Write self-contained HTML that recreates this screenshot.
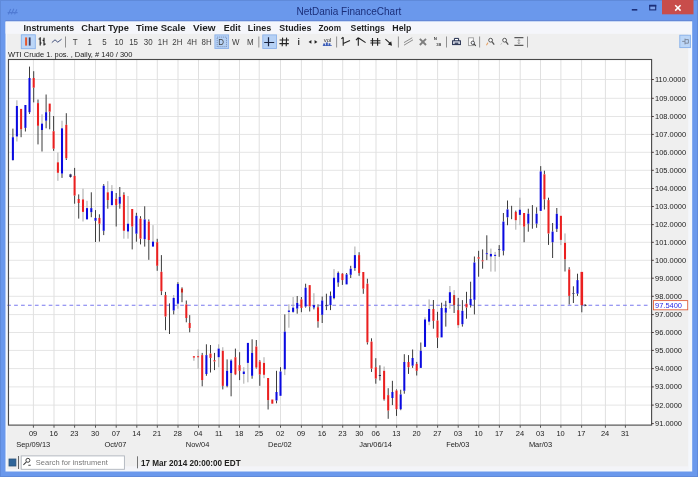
<!DOCTYPE html>
<html><head><meta charset="utf-8"><title>NetDania FinanceChart</title>
<style>
html,body{margin:0;padding:0;}
body{width:698px;height:477px;overflow:hidden;background:#6a98ec;font-family:"Liberation Sans",sans-serif;}
svg{display:block;position:absolute;left:0;top:0;will-change:transform;}
text{font-family:"Liberation Sans",sans-serif;}
</style></head><body>
<svg width="698" height="477" viewBox="0 0 698 477">
<rect x="0" y="0" width="698" height="477" fill="#6a98ec"/>
<rect x="0" y="0" width="698" height="1" fill="#5f8ada"/>
<rect x="0" y="0" width="1" height="477" fill="#5f8ada"/>
<rect x="697" y="0" width="1" height="477" fill="#5f8ada"/>
<rect x="0" y="476" width="698" height="1" fill="#5f8ada"/>
<rect x="5.5" y="20.2" width="686.7" height="1.2" fill="#6384d2"/>
<rect x="5.5" y="21.3" width="686.7" height="450.2" fill="#f4f7fc"/>
<rect x="7" y="33.6" width="681.2" height="435.8" fill="#efefef"/>
<rect x="124" y="466.4" width="564.2" height="3.2" fill="#f3f4f8"/>
<rect x="5.6" y="22" width="686.4" height="11.6" fill="#f5f6fb"/>
<text x="296.4" y="15" font-size="10.8" fill="#1b2f7a" textLength="104.9" lengthAdjust="spacingAndGlyphs">NetDania FinanceChart</text>
<path d="M8.4 14.4 L10.6 9 M11.4 14.4 L13.8 8.8 M14.6 14.4 L16.8 9.4 M7.6 12.6 H17.6" stroke="#507bd4" stroke-width="1.1" fill="none"/>
<rect x="631.8" y="9" width="5.5" height="1.6" fill="#1b2f7a"/>
<rect x="649.7" y="5.3" width="6" height="4.6" fill="#7ea3ea" stroke="#1b2f7a" stroke-width="1.1"/>
<rect x="649.2" y="5" width="7" height="1.6" fill="#1b2f7a"/>
<rect x="662" y="0" width="31.5" height="14.3" fill="#c84d4b"/>
<path d="M675.2 5.2 L680.6 10.6 M680.6 5.2 L675.2 10.6" stroke="#fff" stroke-width="1.5" fill="none"/>
<text x="23.6" y="31" font-size="9.1" font-weight="bold" fill="#1e1e1e" textLength="50.6" lengthAdjust="spacingAndGlyphs">Instruments</text>
<text x="81.2" y="31" font-size="9.1" font-weight="bold" fill="#1e1e1e" textLength="47.7" lengthAdjust="spacingAndGlyphs">Chart Type</text>
<text x="135.9" y="31" font-size="9.1" font-weight="bold" fill="#1e1e1e" textLength="49.7" lengthAdjust="spacingAndGlyphs">Time Scale</text>
<text x="193.0" y="31" font-size="9.1" font-weight="bold" fill="#1e1e1e" textLength="22.6" lengthAdjust="spacingAndGlyphs">View</text>
<text x="223.7" y="31" font-size="9.1" font-weight="bold" fill="#1e1e1e" textLength="17.0" lengthAdjust="spacingAndGlyphs">Edit</text>
<text x="247.7" y="31" font-size="9.1" font-weight="bold" fill="#1e1e1e" textLength="23.6" lengthAdjust="spacingAndGlyphs">Lines</text>
<text x="279.3" y="31" font-size="9.1" font-weight="bold" fill="#1e1e1e" textLength="32.1" lengthAdjust="spacingAndGlyphs">Studies</text>
<text x="318.5" y="31" font-size="9.1" font-weight="bold" fill="#1e1e1e" textLength="22.5" lengthAdjust="spacingAndGlyphs">Zoom</text>
<text x="350.6" y="31" font-size="9.1" font-weight="bold" fill="#1e1e1e" textLength="34.3" lengthAdjust="spacingAndGlyphs">Settings</text>
<text x="392.3" y="31" font-size="9.1" font-weight="bold" fill="#1e1e1e" textLength="19.1" lengthAdjust="spacingAndGlyphs">Help</text>
<rect x="21.3" y="34.8" width="14" height="13.9" fill="#bcd6f7" stroke="#86b0ea" stroke-width="0.9"/>
<rect x="25.1" y="37.4" width="2" height="8.2" fill="#e4572e"/>
<rect x="28.8" y="37.4" width="1.8" height="8.2" fill="#3a3f66"/>
<path d="M40.2 37.2 V45.4 M38.6 39 H40.2 M40.2 43 H41.6 M44 37.8 V45.6 M42.6 40.4 H44 M44 44.2 H45.6" stroke="#222" stroke-width="1.2" fill="none"/>
<path d="M51.8 42.6 L55 39.8 L57.8 42.2 L61.6 39.2" stroke="#3b4a78" stroke-width="0.95" fill="none"/>
<rect x="65.0" y="36.5" width="0.9" height="11" fill="#858585"/>
<rect x="258.4" y="36.5" width="0.9" height="11" fill="#858585"/>
<rect x="336.2" y="36.5" width="0.9" height="11" fill="#858585"/>
<rect x="397.9" y="36.5" width="0.9" height="11" fill="#858585"/>
<rect x="446.1" y="36.5" width="0.9" height="11" fill="#858585"/>
<rect x="479.2" y="36.5" width="0.9" height="11" fill="#858585"/>
<rect x="527.0" y="36.5" width="0.9" height="11" fill="#858585"/>
<text transform="translate(75.2,44.9) scale(0.88,1)" font-size="9" text-anchor="middle" fill="#3c3c3c">T</text>
<text transform="translate(89.8,44.9) scale(0.88,1)" font-size="9" text-anchor="middle" fill="#3c3c3c">1</text>
<text transform="translate(104.4,44.9) scale(0.88,1)" font-size="9" text-anchor="middle" fill="#3c3c3c">5</text>
<text transform="translate(119.0,44.9) scale(0.88,1)" font-size="9" text-anchor="middle" fill="#3c3c3c">10</text>
<text transform="translate(133.6,44.9) scale(0.88,1)" font-size="9" text-anchor="middle" fill="#3c3c3c">15</text>
<text transform="translate(148.2,44.9) scale(0.88,1)" font-size="9" text-anchor="middle" fill="#3c3c3c">30</text>
<text transform="translate(162.8,44.9) scale(0.88,1)" font-size="9" text-anchor="middle" fill="#3c3c3c">1H</text>
<text transform="translate(177.4,44.9) scale(0.88,1)" font-size="9" text-anchor="middle" fill="#3c3c3c">2H</text>
<text transform="translate(192.0,44.9) scale(0.88,1)" font-size="9" text-anchor="middle" fill="#3c3c3c">4H</text>
<text transform="translate(206.6,44.9) scale(0.88,1)" font-size="9" text-anchor="middle" fill="#3c3c3c">8H</text>
<rect x="214.9" y="34.9" width="13.7" height="13.6" fill="#b6d1f5" stroke="#8db2ea" stroke-width="0.9"/>
<rect x="217.2" y="37.1" width="9.3" height="9.6" fill="none" stroke="#5a6f99" stroke-width="0.7" stroke-dasharray="1 1"/>
<text transform="translate(221.2,44.9) scale(0.88,1)" font-size="9" text-anchor="middle" fill="#3c3c3c">D</text>
<text transform="translate(235.8,44.9) scale(0.88,1)" font-size="9" text-anchor="middle" fill="#3c3c3c">W</text>
<text transform="translate(250.4,44.9) scale(0.88,1)" font-size="9" text-anchor="middle" fill="#3c3c3c">M</text>
<rect x="262.8" y="34.9" width="13.7" height="13.6" fill="#b6d1f5" stroke="#8db2ea" stroke-width="0.9"/>
<path d="M264.2 42.5 H274.2 M268.5 37.2 V46.2" stroke="#1a2440" stroke-width="1.2" fill="none"/>
<path d="M279.6 40 H289 M279.4 43.6 H288.8 M282.6 37.6 L282.2 46.2 M286.6 37.6 L286.2 46.2" stroke="#222" stroke-width="1.1" fill="none"/>
<text x="298.6" y="44.9" font-size="8.6" text-anchor="middle" font-family="Liberation Mono" font-weight="bold" fill="#333">i</text>
<path d="M308.6 41.9 L311.4 40.1 V43.7 Z M317.4 41.9 L314.6 40.1 V43.7 Z" fill="#222"/>
<text x="327.6" y="41.6" font-size="6" text-anchor="middle" fill="#333">vol</text>
<path d="M323.2 45.6 V43.4 H325 V45.6 Z M325.8 45.6 V42.6 H327.8 V45.6 Z M328.6 45.6 V43.2 H330.4 V45.6 Z M322.8 45.2 H331.8 V45.9 H322.8 Z" fill="#3a5cb8"/>
<path d="M343.2 37.2 V45.8 M341.4 38.8 L343.2 37.2 M343.2 43.6 L350 40.6" stroke="#222" stroke-width="1.1" fill="none"/>
<path d="M358.3 37.4 V45.8 M356 40.2 L358.3 37.6 M358.3 37.8 L365.6 42.6" stroke="#222" stroke-width="1.1" fill="none"/>
<path d="M372.5 37.9 V45.8 M377.6 37.9 V45.8 M370.4 40.7 H380.4 M370.4 43 H380.4" stroke="#222" stroke-width="1.1" fill="none"/>
<path d="M385.4 39.1 L390.4 43.6" stroke="#222" stroke-width="1.1" fill="none"/>
<path d="M392 45.8 L387.8 44.6 L391.2 41.2 Z" fill="#222"/>
<path d="M404 45.2 L413 39.8 M404 42.6 L412.2 37.8" stroke="#8c8c8c" stroke-width="1" fill="none"/>
<path d="M419.8 38.8 L426 45 M426 38.8 L419.8 45" stroke="#7e7e7e" stroke-width="1.9" fill="none"/>
<text x="433.8" y="40" font-size="4.4" fill="#444" font-weight="bold">N</text>
<text x="436.2" y="46" font-size="4.4" fill="#444" font-weight="bold">38</text>
<path d="M454.4 41 V38.4 H458.6 V41" stroke="#1f2a4a" stroke-width="1" fill="#fff"/>
<rect x="452.6" y="40.8" width="7.8" height="3.8" fill="#dfe3ee" stroke="#1f2a4a" stroke-width="1"/>
<rect x="454.6" y="42.6" width="3.8" height="1.2" fill="#1f2a4a"/>
<rect x="468.6" y="37.8" width="4.8" height="7.8" fill="#fbfbfb" stroke="#9a9a9a" stroke-width="0.9"/>
<circle cx="472.8" cy="42.8" r="1.7" fill="#f4f6ff" stroke="#444" stroke-width="0.9"/>
<path d="M474 44 L475.8 45.8" stroke="#444" stroke-width="1.1"/>
<circle cx="490.6" cy="40.2" r="1.9" fill="#fafafa" stroke="#555" stroke-width="1"/>
<path d="M492.0 41.6 L494.2 44.6" stroke="#555" stroke-width="1.3"/>
<circle cx="504.6" cy="40.2" r="1.9" fill="#fafafa" stroke="#555" stroke-width="1"/>
<path d="M506.0 41.6 L508.2 44.6" stroke="#555" stroke-width="1.3"/>
<path d="M486.4 45.2 L488 42.6" stroke="#e8a56a" stroke-width="1.1"/>
<path d="M500.6 44.8 L502 42.8" stroke="#c8c8c8" stroke-width="1"/>
<path d="M514.4 37.7 H523.4 M514.4 45.4 H523.4" stroke="#5a5a5a" stroke-width="1.3"/>
<path d="M518.9 39.6 V43.6 M517.8 40.8 L518.9 39.6 L520 40.8 M517.8 42.6 L518.9 43.8 L520 42.6" stroke="#8a8a8a" stroke-width="0.8" fill="none"/>
<rect x="679.8" y="35.2" width="10.6" height="12.4" fill="#bcd6f7" stroke="#86b0ea" stroke-width="0.9"/>
<path d="M682.2 41.4 H685 M685 38.6 V44.4 M685 39.6 H688.4 M685 43.2 H688.4 M688.4 39.6 V43.2" stroke="#7a8699" stroke-width="0.9" fill="none"/>
<text x="8" y="57.3" font-size="7.47" fill="#222" textLength="124.4" lengthAdjust="spacingAndGlyphs">WTI Crude 1. pos. , Daily, # 140 / 300</text>
<rect x="8.5" y="59.5" width="643.1" height="365.6" fill="#fff"/>
<rect x="8.5" y="404.60" width="643.1" height="1" fill="#e5e5e5"/>
<rect x="8.5" y="386.40" width="643.1" height="1" fill="#e5e5e5"/>
<rect x="8.5" y="368.10" width="643.1" height="1" fill="#e5e5e5"/>
<rect x="8.5" y="349.90" width="643.1" height="1" fill="#e5e5e5"/>
<rect x="8.5" y="332.00" width="643.1" height="1" fill="#e5e5e5"/>
<rect x="8.5" y="314.10" width="643.1" height="1" fill="#e5e5e5"/>
<rect x="8.5" y="295.80" width="643.1" height="1" fill="#e5e5e5"/>
<rect x="8.5" y="277.70" width="643.1" height="1" fill="#e5e5e5"/>
<rect x="8.5" y="259.80" width="643.1" height="1" fill="#e5e5e5"/>
<rect x="8.5" y="241.80" width="643.1" height="1" fill="#e5e5e5"/>
<rect x="8.5" y="224.10" width="643.1" height="1" fill="#e5e5e5"/>
<rect x="8.5" y="206.00" width="643.1" height="1" fill="#e5e5e5"/>
<rect x="8.5" y="188.00" width="643.1" height="1" fill="#e5e5e5"/>
<rect x="8.5" y="169.80" width="643.1" height="1" fill="#e5e5e5"/>
<rect x="8.5" y="151.80" width="643.1" height="1" fill="#e5e5e5"/>
<rect x="8.5" y="133.90" width="643.1" height="1" fill="#e5e5e5"/>
<rect x="8.5" y="116.00" width="643.1" height="1" fill="#e5e5e5"/>
<rect x="8.5" y="97.80" width="643.1" height="1" fill="#e5e5e5"/>
<rect x="8.5" y="79.00" width="643.1" height="1" fill="#e5e5e5"/>
<rect x="32.90" y="59.5" width="1" height="365.6" fill="#e0e0e0"/>
<rect x="53.50" y="59.5" width="1" height="365.6" fill="#e0e0e0"/>
<rect x="74.10" y="59.5" width="1" height="365.6" fill="#e0e0e0"/>
<rect x="95.00" y="59.5" width="1" height="365.6" fill="#e0e0e0"/>
<rect x="115.70" y="59.5" width="1" height="365.6" fill="#e0e0e0"/>
<rect x="136.30" y="59.5" width="1" height="365.6" fill="#e0e0e0"/>
<rect x="156.80" y="59.5" width="1" height="365.6" fill="#e0e0e0"/>
<rect x="177.50" y="59.5" width="1" height="365.6" fill="#e0e0e0"/>
<rect x="198.00" y="59.5" width="1" height="365.6" fill="#e0e0e0"/>
<rect x="218.60" y="59.5" width="1" height="365.6" fill="#e0e0e0"/>
<rect x="239.00" y="59.5" width="1" height="365.6" fill="#e0e0e0"/>
<rect x="258.70" y="59.5" width="1" height="365.6" fill="#e0e0e0"/>
<rect x="280.00" y="59.5" width="1" height="365.6" fill="#e0e0e0"/>
<rect x="300.90" y="59.5" width="1" height="365.6" fill="#e0e0e0"/>
<rect x="321.80" y="59.5" width="1" height="365.6" fill="#e0e0e0"/>
<rect x="342.20" y="59.5" width="1" height="365.6" fill="#e0e0e0"/>
<rect x="359.10" y="59.5" width="1" height="365.6" fill="#ebebeb"/>
<rect x="375.50" y="59.5" width="1" height="365.6" fill="#e0e0e0"/>
<rect x="396.10" y="59.5" width="1" height="365.6" fill="#e0e0e0"/>
<rect x="416.40" y="59.5" width="1" height="365.6" fill="#e0e0e0"/>
<rect x="437.10" y="59.5" width="1" height="365.6" fill="#e0e0e0"/>
<rect x="457.70" y="59.5" width="1" height="365.6" fill="#e0e0e0"/>
<rect x="478.20" y="59.5" width="1" height="365.6" fill="#e0e0e0"/>
<rect x="498.90" y="59.5" width="1" height="365.6" fill="#e0e0e0"/>
<rect x="519.70" y="59.5" width="1" height="365.6" fill="#e0e0e0"/>
<rect x="540.00" y="59.5" width="1" height="365.6" fill="#e0e0e0"/>
<rect x="560.40" y="59.5" width="1" height="365.6" fill="#e0e0e0"/>
<rect x="581.10" y="59.5" width="1" height="365.6" fill="#e0e0e0"/>
<rect x="604.90" y="59.5" width="1" height="365.6" fill="#e0e0e0"/>
<rect x="624.90" y="59.5" width="1" height="365.6" fill="#e0e0e0"/>
<line x1="7.2" y1="305.2" x2="648.5" y2="305.2" stroke="#7878ee" stroke-width="1.1" stroke-dasharray="3.7 3.22"/>
<rect x="12.40" y="128.6" width="1" height="8.6" fill="#3c3c3c"/>
<rect x="12.40" y="160.1" width="1" height="0.4" fill="#3c3c3c"/>
<rect x="11.88" y="137.2" width="2.05" height="22.9" fill="#0a0ae0"/>
<rect x="16.40" y="100.3" width="1" height="5.7" fill="#a8a8a8"/>
<rect x="16.40" y="136.5" width="1" height="5.0" fill="#a8a8a8"/>
<rect x="15.87" y="106.0" width="2.05" height="30.5" fill="#0a0ae0"/>
<rect x="20.60" y="129.3" width="1" height="7.9" fill="#3c3c3c"/>
<rect x="20.08" y="108.9" width="2.05" height="20.4" fill="#ea2020"/>
<rect x="24.90" y="127.9" width="1" height="3.6" fill="#3c3c3c"/>
<rect x="24.38" y="105.0" width="2.05" height="22.9" fill="#0a0ae0"/>
<rect x="29.00" y="66.6" width="1" height="11.4" fill="#3c3c3c"/>
<rect x="29.00" y="112.2" width="1" height="1.7" fill="#3c3c3c"/>
<rect x="28.48" y="78.0" width="2.05" height="34.2" fill="#0a0ae0"/>
<rect x="33.20" y="71.2" width="1" height="6.8" fill="#3c3c3c"/>
<rect x="33.20" y="87.7" width="1" height="14.7" fill="#3c3c3c"/>
<rect x="32.68" y="78.0" width="2.05" height="9.7" fill="#ea2020"/>
<rect x="37.50" y="99.5" width="1" height="3.6" fill="#3c3c3c"/>
<rect x="37.50" y="125.8" width="1" height="18.6" fill="#3c3c3c"/>
<rect x="36.98" y="103.1" width="2.05" height="22.7" fill="#ea2020"/>
<rect x="41.50" y="114.3" width="1" height="9.3" fill="#a8a8a8"/>
<rect x="41.50" y="130.0" width="1" height="21.5" fill="#3c3c3c"/>
<rect x="40.98" y="123.6" width="2.05" height="6.4" fill="#0a0ae0"/>
<rect x="45.60" y="94.5" width="1" height="17.7" fill="#3c3c3c"/>
<rect x="45.60" y="120.7" width="1" height="7.6" fill="#3c3c3c"/>
<rect x="45.08" y="112.2" width="2.05" height="8.5" fill="#0a0ae0"/>
<rect x="49.20" y="111.7" width="1" height="17.6" fill="#3c3c3c"/>
<rect x="48.68" y="103.6" width="2.05" height="8.1" fill="#ea2020"/>
<rect x="53.10" y="116.0" width="1" height="15.2" fill="#3c3c3c"/>
<rect x="53.10" y="148.7" width="1" height="2.1" fill="#3c3c3c"/>
<rect x="52.58" y="131.2" width="2.05" height="17.5" fill="#ea2020"/>
<rect x="57.40" y="152.5" width="1" height="9.8" fill="#a8a8a8"/>
<rect x="57.40" y="172.8" width="1" height="8.0" fill="#a8a8a8"/>
<rect x="56.88" y="162.3" width="2.05" height="10.5" fill="#ea2020"/>
<rect x="61.50" y="120.7" width="1" height="7.6" fill="#a8a8a8"/>
<rect x="61.50" y="173.6" width="1" height="4.3" fill="#3c3c3c"/>
<rect x="60.98" y="128.3" width="2.05" height="45.3" fill="#0a0ae0"/>
<rect x="65.80" y="113.2" width="1" height="11.6" fill="#3c3c3c"/>
<rect x="65.80" y="158.3" width="1" height="1.7" fill="#3c3c3c"/>
<rect x="65.27" y="124.8" width="2.05" height="33.5" fill="#ea2020"/>
<rect x="70.00" y="173.8" width="1" height="0.5" fill="#3c3c3c"/>
<rect x="70.00" y="177.0" width="1" height="0.5" fill="#3c3c3c"/>
<rect x="69.40" y="174.3" width="2.2" height="2.7" fill="#25255a"/>
<rect x="74.10" y="167.9" width="1" height="7.9" fill="#3c3c3c"/>
<rect x="74.10" y="195.6" width="1" height="8.1" fill="#3c3c3c"/>
<rect x="73.57" y="175.8" width="2.05" height="19.8" fill="#ea2020"/>
<rect x="78.20" y="194.4" width="1" height="4.6" fill="#3c3c3c"/>
<rect x="78.20" y="203.0" width="1" height="15.6" fill="#3c3c3c"/>
<rect x="77.67" y="199.0" width="2.05" height="4.0" fill="#ea2020"/>
<rect x="82.50" y="188.7" width="1" height="10.7" fill="#a8a8a8"/>
<rect x="82.50" y="211.9" width="1" height="9.6" fill="#a8a8a8"/>
<rect x="81.97" y="199.4" width="2.05" height="12.5" fill="#ea2020"/>
<rect x="86.50" y="200.8" width="1" height="7.3" fill="#a8a8a8"/>
<rect x="85.97" y="208.1" width="2.05" height="11.3" fill="#0a0ae0"/>
<rect x="90.80" y="192.3" width="1" height="15.8" fill="#3c3c3c"/>
<rect x="90.80" y="212.2" width="1" height="5.0" fill="#3c3c3c"/>
<rect x="90.27" y="208.1" width="2.05" height="4.1" fill="#0a0ae0"/>
<rect x="95.00" y="210.1" width="1" height="7.8" fill="#3c3c3c"/>
<rect x="95.00" y="220.8" width="1" height="21.2" fill="#3c3c3c"/>
<rect x="94.47" y="217.9" width="2.05" height="2.9" fill="#0a0ae0"/>
<rect x="98.90" y="214.3" width="1" height="3.6" fill="#3c3c3c"/>
<rect x="98.90" y="223.7" width="1" height="17.9" fill="#3c3c3c"/>
<rect x="98.38" y="217.9" width="2.05" height="5.8" fill="#ea2020"/>
<rect x="103.20" y="184.1" width="1" height="1.7" fill="#3c3c3c"/>
<rect x="103.20" y="230.8" width="1" height="4.3" fill="#3c3c3c"/>
<rect x="102.67" y="185.8" width="2.05" height="45.0" fill="#0a0ae0"/>
<rect x="107.30" y="181.2" width="1" height="11.1" fill="#a8a8a8"/>
<rect x="107.30" y="200.1" width="1" height="8.6" fill="#3c3c3c"/>
<rect x="106.77" y="192.3" width="2.05" height="7.8" fill="#ea2020"/>
<rect x="111.40" y="185.1" width="1" height="6.0" fill="#a8a8a8"/>
<rect x="110.88" y="191.1" width="2.05" height="14.1" fill="#0a0ae0"/>
<rect x="115.70" y="193.0" width="1" height="5.7" fill="#3c3c3c"/>
<rect x="115.70" y="205.1" width="1" height="21.4" fill="#3c3c3c"/>
<rect x="115.17" y="198.7" width="2.05" height="6.4" fill="#ea2020"/>
<rect x="119.30" y="187.0" width="1" height="9.8" fill="#3c3c3c"/>
<rect x="119.30" y="203.8" width="1" height="4.9" fill="#3c3c3c"/>
<rect x="118.77" y="196.8" width="2.05" height="7.0" fill="#0a0ae0"/>
<rect x="123.40" y="192.3" width="1" height="2.4" fill="#3c3c3c"/>
<rect x="123.40" y="230.8" width="1" height="7.9" fill="#a8a8a8"/>
<rect x="122.88" y="194.7" width="2.05" height="36.1" fill="#ea2020"/>
<rect x="127.50" y="196.0" width="1" height="27.7" fill="#a8a8a8"/>
<rect x="127.50" y="231.5" width="1" height="7.2" fill="#a8a8a8"/>
<rect x="126.97" y="223.7" width="2.05" height="7.8" fill="#0a0ae0"/>
<rect x="131.70" y="226.5" width="1" height="22.9" fill="#3c3c3c"/>
<rect x="131.17" y="209.0" width="2.05" height="17.5" fill="#ea2020"/>
<rect x="135.90" y="212.8" width="1" height="3.0" fill="#3c3c3c"/>
<rect x="135.90" y="233.7" width="1" height="8.0" fill="#3c3c3c"/>
<rect x="135.38" y="215.8" width="2.05" height="17.9" fill="#0a0ae0"/>
<rect x="140.00" y="216.2" width="1" height="2.4" fill="#3c3c3c"/>
<rect x="140.00" y="238.7" width="1" height="5.7" fill="#3c3c3c"/>
<rect x="139.47" y="218.6" width="2.05" height="20.1" fill="#ea2020"/>
<rect x="144.20" y="206.3" width="1" height="13.1" fill="#3c3c3c"/>
<rect x="144.20" y="239.2" width="1" height="7.4" fill="#3c3c3c"/>
<rect x="143.67" y="219.4" width="2.05" height="19.8" fill="#0a0ae0"/>
<rect x="148.30" y="219.4" width="1" height="2.1" fill="#3c3c3c"/>
<rect x="148.30" y="240.0" width="1" height="19.8" fill="#3c3c3c"/>
<rect x="147.78" y="221.5" width="2.05" height="18.5" fill="#ea2020"/>
<rect x="152.50" y="225.1" width="1" height="16.5" fill="#a8a8a8"/>
<rect x="151.97" y="241.6" width="2.05" height="5.0" fill="#0a0ae0"/>
<rect x="156.70" y="238.8" width="1" height="3.4" fill="#3c3c3c"/>
<rect x="156.70" y="265.8" width="1" height="5.0" fill="#3c3c3c"/>
<rect x="156.17" y="242.2" width="2.05" height="23.6" fill="#ea2020"/>
<rect x="160.90" y="255.1" width="1" height="16.7" fill="#3c3c3c"/>
<rect x="160.90" y="291.2" width="1" height="3.9" fill="#3c3c3c"/>
<rect x="160.38" y="271.8" width="2.05" height="19.4" fill="#ea2020"/>
<rect x="165.00" y="291.9" width="1" height="3.2" fill="#3c3c3c"/>
<rect x="165.00" y="316.5" width="1" height="13.7" fill="#3c3c3c"/>
<rect x="164.47" y="295.1" width="2.05" height="21.4" fill="#ea2020"/>
<rect x="169.00" y="303.4" width="1" height="9.6" fill="#3c3c3c"/>
<rect x="169.00" y="313.0" width="1" height="21.0" fill="#3c3c3c"/>
<rect x="173.20" y="295.0" width="1" height="2.9" fill="#a8a8a8"/>
<rect x="173.20" y="310.5" width="1" height="3.9" fill="#3c3c3c"/>
<rect x="172.67" y="297.9" width="2.05" height="12.6" fill="#0a0ae0"/>
<rect x="177.40" y="282.2" width="1" height="1.8" fill="#3c3c3c"/>
<rect x="177.40" y="303.7" width="1" height="5.0" fill="#a8a8a8"/>
<rect x="176.88" y="284.0" width="2.05" height="19.7" fill="#0a0ae0"/>
<rect x="181.50" y="287.3" width="1" height="1.1" fill="#3c3c3c"/>
<rect x="181.50" y="292.7" width="1" height="9.5" fill="#3c3c3c"/>
<rect x="180.97" y="288.4" width="2.05" height="4.3" fill="#c42a22"/>
<rect x="185.80" y="300.5" width="1" height="3.9" fill="#3c3c3c"/>
<rect x="185.80" y="318.0" width="1" height="4.3" fill="#3c3c3c"/>
<rect x="185.28" y="304.4" width="2.05" height="13.6" fill="#ea2020"/>
<rect x="189.20" y="315.1" width="1" height="7.9" fill="#3c3c3c"/>
<rect x="189.20" y="328.0" width="1" height="4.3" fill="#3c3c3c"/>
<rect x="188.67" y="323.0" width="2.05" height="5.0" fill="#ea2020"/>
<rect x="193.40" y="357.6" width="1" height="3.2" fill="#a8a8a8"/>
<rect x="192.88" y="356.2" width="2.05" height="1.4" fill="#ea2020"/>
<rect x="197.60" y="349.3" width="1" height="6.9" fill="#a8a8a8"/>
<rect x="197.60" y="357.3" width="1" height="11.4" fill="#a8a8a8"/>
<rect x="197.07" y="356.2" width="2.05" height="1.1" fill="#ea2020"/>
<rect x="201.70" y="352.9" width="1" height="2.2" fill="#3c3c3c"/>
<rect x="201.70" y="380.1" width="1" height="6.2" fill="#3c3c3c"/>
<rect x="201.17" y="355.1" width="2.05" height="25.0" fill="#ea2020"/>
<rect x="205.90" y="344.3" width="1" height="10.8" fill="#3c3c3c"/>
<rect x="205.90" y="374.0" width="1" height="1.8" fill="#3c3c3c"/>
<rect x="205.38" y="355.1" width="2.05" height="18.9" fill="#0a0ae0"/>
<rect x="210.00" y="345.0" width="1" height="8.6" fill="#3c3c3c"/>
<rect x="210.00" y="357.9" width="1" height="14.6" fill="#3c3c3c"/>
<rect x="209.47" y="353.6" width="2.05" height="4.3" fill="#ea2020"/>
<rect x="214.00" y="352.9" width="1" height="7.2" fill="#3c3c3c"/>
<rect x="214.00" y="361.5" width="1" height="8.6" fill="#3c3c3c"/>
<rect x="213.47" y="360.1" width="2.05" height="1.4" fill="#ea2020"/>
<rect x="218.20" y="344.3" width="1" height="4.3" fill="#a8a8a8"/>
<rect x="218.20" y="357.2" width="1" height="10.0" fill="#a8a8a8"/>
<rect x="217.67" y="348.6" width="2.05" height="8.6" fill="#0a0ae0"/>
<rect x="222.30" y="347.2" width="1" height="3.6" fill="#a8a8a8"/>
<rect x="222.30" y="385.9" width="1" height="3.5" fill="#3c3c3c"/>
<rect x="221.78" y="350.8" width="2.05" height="35.1" fill="#ea2020"/>
<rect x="226.60" y="359.4" width="1" height="11.4" fill="#3c3c3c"/>
<rect x="226.60" y="385.9" width="1" height="1.4" fill="#3c3c3c"/>
<rect x="226.07" y="370.8" width="2.05" height="15.1" fill="#0a0ae0"/>
<rect x="230.60" y="359.4" width="1" height="1.1" fill="#3c3c3c"/>
<rect x="230.60" y="373.0" width="1" height="23.3" fill="#3c3c3c"/>
<rect x="230.07" y="360.5" width="2.05" height="12.5" fill="#0a0ae0"/>
<rect x="234.90" y="348.6" width="1" height="8.6" fill="#3c3c3c"/>
<rect x="234.90" y="374.4" width="1" height="0.7" fill="#3c3c3c"/>
<rect x="234.38" y="357.2" width="2.05" height="17.2" fill="#ea2020"/>
<rect x="239.10" y="352.2" width="1" height="12.9" fill="#3c3c3c"/>
<rect x="239.10" y="370.8" width="1" height="9.3" fill="#3c3c3c"/>
<rect x="238.57" y="365.1" width="2.05" height="5.7" fill="#ea2020"/>
<rect x="243.30" y="367.2" width="1" height="4.3" fill="#a8a8a8"/>
<rect x="243.30" y="374.0" width="1" height="9.7" fill="#a8a8a8"/>
<rect x="242.78" y="371.5" width="2.05" height="2.5" fill="#0a0ae0"/>
<rect x="247.40" y="362.9" width="1" height="19.4" fill="#a8a8a8"/>
<rect x="246.88" y="342.9" width="2.05" height="20.0" fill="#0a0ae0"/>
<rect x="251.60" y="339.3" width="1" height="13.6" fill="#3c3c3c"/>
<rect x="251.60" y="375.8" width="1" height="2.9" fill="#3c3c3c"/>
<rect x="251.07" y="352.9" width="2.05" height="22.9" fill="#0a0ae0"/>
<rect x="255.80" y="340.0" width="1" height="6.5" fill="#3c3c3c"/>
<rect x="255.80" y="367.5" width="1" height="1.1" fill="#3c3c3c"/>
<rect x="255.28" y="346.5" width="2.05" height="21.0" fill="#ea2020"/>
<rect x="259.30" y="360.1" width="1" height="1.4" fill="#3c3c3c"/>
<rect x="259.30" y="374.5" width="1" height="11.3" fill="#3c3c3c"/>
<rect x="258.78" y="361.5" width="2.05" height="13.0" fill="#ea2020"/>
<rect x="263.50" y="357.2" width="1" height="5.7" fill="#a8a8a8"/>
<rect x="263.50" y="374.8" width="1" height="3.4" fill="#a8a8a8"/>
<rect x="262.98" y="362.9" width="2.05" height="11.9" fill="#ea2020"/>
<rect x="267.60" y="400.1" width="1" height="9.4" fill="#3c3c3c"/>
<rect x="267.08" y="378.0" width="2.05" height="22.1" fill="#ea2020"/>
<rect x="271.28" y="399.5" width="2.05" height="4.2" fill="#ea2020"/>
<rect x="276.00" y="370.8" width="1" height="21.2" fill="#3c3c3c"/>
<rect x="276.00" y="400.5" width="1" height="2.8" fill="#3c3c3c"/>
<rect x="275.48" y="392.0" width="2.05" height="8.5" fill="#0a0ae0"/>
<rect x="280.00" y="367.2" width="1" height="4.3" fill="#3c3c3c"/>
<rect x="279.48" y="371.5" width="2.05" height="24.3" fill="#0a0ae0"/>
<rect x="284.30" y="314.4" width="1" height="17.2" fill="#3c3c3c"/>
<rect x="284.30" y="369.3" width="1" height="5.8" fill="#a8a8a8"/>
<rect x="283.78" y="331.6" width="2.05" height="37.7" fill="#0a0ae0"/>
<rect x="288.40" y="304.3" width="1" height="6.2" fill="#a8a8a8"/>
<rect x="288.40" y="311.9" width="1" height="15.8" fill="#a8a8a8"/>
<rect x="287.88" y="310.5" width="2.05" height="1.4" fill="#0a0ae0"/>
<rect x="292.60" y="297.0" width="1" height="10.6" fill="#a8a8a8"/>
<rect x="292.60" y="311.9" width="1" height="0.6" fill="#3c3c3c"/>
<rect x="292.08" y="307.6" width="2.05" height="4.3" fill="#0a0ae0"/>
<rect x="296.70" y="296.0" width="1" height="6.9" fill="#3c3c3c"/>
<rect x="296.70" y="308.6" width="1" height="5.1" fill="#3c3c3c"/>
<rect x="296.18" y="302.9" width="2.05" height="5.7" fill="#0a0ae0"/>
<rect x="300.90" y="297.0" width="1" height="2.4" fill="#3c3c3c"/>
<rect x="300.90" y="307.9" width="1" height="4.3" fill="#3c3c3c"/>
<rect x="300.38" y="299.4" width="2.05" height="8.5" fill="#ea2020"/>
<rect x="305.10" y="283.7" width="1" height="4.0" fill="#3c3c3c"/>
<rect x="305.10" y="306.5" width="1" height="1.1" fill="#3c3c3c"/>
<rect x="304.58" y="287.7" width="2.05" height="18.8" fill="#0a0ae0"/>
<rect x="309.20" y="306.5" width="1" height="5.0" fill="#3c3c3c"/>
<rect x="308.68" y="285.1" width="2.05" height="21.4" fill="#ea2020"/>
<rect x="313.40" y="293.2" width="1" height="11.9" fill="#a8a8a8"/>
<rect x="313.40" y="307.6" width="1" height="1.8" fill="#3c3c3c"/>
<rect x="312.88" y="305.1" width="2.05" height="2.5" fill="#0a0ae0"/>
<rect x="317.50" y="304.3" width="1" height="2.9" fill="#3c3c3c"/>
<rect x="317.50" y="321.5" width="1" height="6.2" fill="#3c3c3c"/>
<rect x="316.98" y="307.2" width="2.05" height="14.3" fill="#ea2020"/>
<rect x="321.70" y="296.5" width="1" height="4.0" fill="#3c3c3c"/>
<rect x="321.70" y="314.8" width="1" height="8.2" fill="#3c3c3c"/>
<rect x="321.18" y="300.5" width="2.05" height="14.3" fill="#0a0ae0"/>
<rect x="325.90" y="293.7" width="1" height="11.4" fill="#3c3c3c"/>
<rect x="325.90" y="306.2" width="1" height="3.9" fill="#3c3c3c"/>
<rect x="325.30" y="305.1" width="2.2" height="1.1" fill="#25255a"/>
<rect x="330.00" y="291.5" width="1" height="4.3" fill="#3c3c3c"/>
<rect x="330.00" y="305.1" width="1" height="5.0" fill="#3c3c3c"/>
<rect x="329.48" y="295.8" width="2.05" height="9.3" fill="#0a0ae0"/>
<rect x="333.50" y="269.1" width="1" height="8.6" fill="#a8a8a8"/>
<rect x="333.50" y="298.0" width="1" height="1.3" fill="#3c3c3c"/>
<rect x="332.98" y="277.7" width="2.05" height="20.3" fill="#0a0ae0"/>
<rect x="337.70" y="271.5" width="1" height="1.5" fill="#3c3c3c"/>
<rect x="337.70" y="282.6" width="1" height="4.2" fill="#3c3c3c"/>
<rect x="337.18" y="273.0" width="2.05" height="9.6" fill="#0a0ae0"/>
<rect x="341.90" y="273.0" width="1" height="0.7" fill="#3c3c3c"/>
<rect x="341.90" y="280.1" width="1" height="4.8" fill="#3c3c3c"/>
<rect x="341.38" y="273.7" width="2.05" height="6.4" fill="#ea2020"/>
<rect x="346.10" y="273.0" width="1" height="1.4" fill="#3c3c3c"/>
<rect x="345.58" y="274.4" width="2.05" height="10.0" fill="#0a0ae0"/>
<rect x="350.20" y="265.8" width="1" height="2.9" fill="#3c3c3c"/>
<rect x="350.20" y="274.8" width="1" height="3.2" fill="#3c3c3c"/>
<rect x="349.68" y="268.7" width="2.05" height="6.1" fill="#0a0ae0"/>
<rect x="354.40" y="246.5" width="1" height="8.6" fill="#a8a8a8"/>
<rect x="354.40" y="268.0" width="1" height="2.8" fill="#3c3c3c"/>
<rect x="353.88" y="255.1" width="2.05" height="12.9" fill="#0a0ae0"/>
<rect x="358.60" y="252.2" width="1" height="2.9" fill="#3c3c3c"/>
<rect x="358.60" y="273.0" width="1" height="2.8" fill="#3c3c3c"/>
<rect x="358.08" y="255.1" width="2.05" height="17.9" fill="#ea2020"/>
<rect x="362.80" y="288.7" width="1" height="5.1" fill="#3c3c3c"/>
<rect x="362.28" y="272.0" width="2.05" height="16.7" fill="#ea2020"/>
<rect x="366.90" y="278.7" width="1" height="5.0" fill="#3c3c3c"/>
<rect x="366.90" y="342.3" width="1" height="2.2" fill="#3c3c3c"/>
<rect x="366.38" y="283.7" width="2.05" height="58.6" fill="#ea2020"/>
<rect x="371.00" y="338.3" width="1" height="3.3" fill="#3c3c3c"/>
<rect x="371.00" y="368.6" width="1" height="3.3" fill="#3c3c3c"/>
<rect x="370.48" y="341.6" width="2.05" height="27.0" fill="#ea2020"/>
<rect x="375.30" y="358.2" width="1" height="9.0" fill="#3c3c3c"/>
<rect x="375.30" y="378.6" width="1" height="5.1" fill="#3c3c3c"/>
<rect x="374.78" y="367.2" width="2.05" height="11.4" fill="#ea2020"/>
<rect x="379.40" y="365.3" width="1" height="9.7" fill="#3c3c3c"/>
<rect x="379.40" y="376.0" width="1" height="4.5" fill="#3c3c3c"/>
<rect x="378.80" y="375.0" width="2.2" height="1.0" fill="#25255a"/>
<rect x="383.60" y="366.5" width="1" height="4.3" fill="#a8a8a8"/>
<rect x="383.60" y="399.4" width="1" height="1.2" fill="#3c3c3c"/>
<rect x="383.08" y="370.8" width="2.05" height="28.6" fill="#ea2020"/>
<rect x="387.70" y="388.2" width="1" height="6.9" fill="#3c3c3c"/>
<rect x="387.70" y="410.6" width="1" height="8.2" fill="#3c3c3c"/>
<rect x="387.18" y="395.1" width="2.05" height="15.5" fill="#ea2020"/>
<rect x="391.90" y="380.8" width="1" height="11.2" fill="#3c3c3c"/>
<rect x="391.90" y="398.0" width="1" height="7.1" fill="#3c3c3c"/>
<rect x="391.38" y="392.0" width="2.05" height="6.0" fill="#0a0ae0"/>
<rect x="396.00" y="389.4" width="1" height="1.1" fill="#3c3c3c"/>
<rect x="396.00" y="409.2" width="1" height="6.7" fill="#3c3c3c"/>
<rect x="395.48" y="390.5" width="2.05" height="18.7" fill="#ea2020"/>
<rect x="400.20" y="389.7" width="1" height="4.7" fill="#3c3c3c"/>
<rect x="400.20" y="409.2" width="1" height="1.0" fill="#3c3c3c"/>
<rect x="399.68" y="394.4" width="2.05" height="14.8" fill="#0a0ae0"/>
<rect x="403.80" y="354.2" width="1" height="7.8" fill="#3c3c3c"/>
<rect x="403.80" y="390.8" width="1" height="2.9" fill="#3c3c3c"/>
<rect x="403.28" y="362.0" width="2.05" height="28.8" fill="#0a0ae0"/>
<rect x="408.00" y="355.1" width="1" height="6.9" fill="#3c3c3c"/>
<rect x="408.00" y="367.2" width="1" height="6.7" fill="#3c3c3c"/>
<rect x="407.48" y="362.0" width="2.05" height="5.2" fill="#ea2020"/>
<rect x="412.10" y="349.5" width="1" height="8.5" fill="#3c3c3c"/>
<rect x="412.10" y="365.7" width="1" height="2.2" fill="#3c3c3c"/>
<rect x="411.58" y="358.0" width="2.05" height="7.7" fill="#0a0ae0"/>
<rect x="416.20" y="361.9" width="1" height="2.0" fill="#3c3c3c"/>
<rect x="416.20" y="370.8" width="1" height="4.7" fill="#3c3c3c"/>
<rect x="415.68" y="363.9" width="2.05" height="6.9" fill="#ea2020"/>
<rect x="420.30" y="342.5" width="1" height="8.3" fill="#3c3c3c"/>
<rect x="419.78" y="350.8" width="2.05" height="17.1" fill="#0a0ae0"/>
<rect x="424.50" y="317.2" width="1" height="2.2" fill="#a8a8a8"/>
<rect x="423.98" y="319.4" width="2.05" height="27.5" fill="#0a0ae0"/>
<rect x="428.60" y="299.4" width="1" height="9.6" fill="#a8a8a8"/>
<rect x="428.60" y="321.7" width="1" height="3.5" fill="#a8a8a8"/>
<rect x="428.08" y="309.0" width="2.05" height="12.7" fill="#0a0ae0"/>
<rect x="432.90" y="300.0" width="1" height="9.0" fill="#3c3c3c"/>
<rect x="432.90" y="320.9" width="1" height="7.8" fill="#3c3c3c"/>
<rect x="432.38" y="309.0" width="2.05" height="11.9" fill="#ea2020"/>
<rect x="437.00" y="311.8" width="1" height="8.7" fill="#3c3c3c"/>
<rect x="437.00" y="337.7" width="1" height="10.3" fill="#3c3c3c"/>
<rect x="436.48" y="320.5" width="2.05" height="17.2" fill="#ea2020"/>
<rect x="441.10" y="302.7" width="1" height="5.3" fill="#3c3c3c"/>
<rect x="440.58" y="308.0" width="2.05" height="29.4" fill="#0a0ae0"/>
<rect x="445.30" y="300.8" width="1" height="7.2" fill="#3c3c3c"/>
<rect x="445.30" y="312.7" width="1" height="13.9" fill="#3c3c3c"/>
<rect x="444.78" y="308.0" width="2.05" height="4.7" fill="#0a0ae0"/>
<rect x="449.40" y="286.0" width="1" height="6.2" fill="#a8a8a8"/>
<rect x="449.40" y="303.0" width="1" height="5.7" fill="#a8a8a8"/>
<rect x="448.88" y="292.2" width="2.05" height="10.8" fill="#0a0ae0"/>
<rect x="453.60" y="290.1" width="1" height="5.0" fill="#a8a8a8"/>
<rect x="453.60" y="305.1" width="1" height="7.9" fill="#3c3c3c"/>
<rect x="453.08" y="295.1" width="2.05" height="10.0" fill="#c42a22"/>
<rect x="457.70" y="297.9" width="1" height="12.2" fill="#3c3c3c"/>
<rect x="457.70" y="325.2" width="1" height="2.8" fill="#a8a8a8"/>
<rect x="457.18" y="310.1" width="2.05" height="15.1" fill="#ea2020"/>
<rect x="461.90" y="300.1" width="1" height="10.7" fill="#3c3c3c"/>
<rect x="461.90" y="324.2" width="1" height="2.4" fill="#3c3c3c"/>
<rect x="461.38" y="310.8" width="2.05" height="13.4" fill="#0a0ae0"/>
<rect x="466.00" y="291.8" width="1" height="11.9" fill="#3c3c3c"/>
<rect x="466.00" y="307.5" width="1" height="11.2" fill="#3c3c3c"/>
<rect x="465.48" y="303.7" width="2.05" height="3.8" fill="#ea2020"/>
<rect x="470.10" y="281.7" width="1" height="17.2" fill="#3c3c3c"/>
<rect x="470.10" y="305.1" width="1" height="2.4" fill="#3c3c3c"/>
<rect x="469.58" y="298.9" width="2.05" height="6.2" fill="#0a0ae0"/>
<rect x="473.90" y="256.5" width="1" height="6.0" fill="#3c3c3c"/>
<rect x="473.90" y="299.8" width="1" height="14.6" fill="#3c3c3c"/>
<rect x="473.38" y="262.5" width="2.05" height="37.3" fill="#0a0ae0"/>
<rect x="478.10" y="250.8" width="1" height="6.4" fill="#3c3c3c"/>
<rect x="478.10" y="258.7" width="1" height="18.0" fill="#3c3c3c"/>
<rect x="477.58" y="257.2" width="2.05" height="1.5" fill="#ea2020"/>
<rect x="482.10" y="249.4" width="1" height="10.9" fill="#3c3c3c"/>
<rect x="482.10" y="261.3" width="1" height="7.4" fill="#3c3c3c"/>
<rect x="481.58" y="260.3" width="2.05" height="1.0" fill="#ea2020"/>
<rect x="486.30" y="235.3" width="1" height="17.9" fill="#3c3c3c"/>
<rect x="486.30" y="254.2" width="1" height="5.9" fill="#3c3c3c"/>
<rect x="485.78" y="253.2" width="2.05" height="1.0" fill="#0a0ae0"/>
<rect x="490.40" y="248.6" width="1" height="5.3" fill="#a8a8a8"/>
<rect x="490.40" y="256.5" width="1" height="15.1" fill="#a8a8a8"/>
<rect x="489.88" y="253.9" width="2.05" height="2.6" fill="#0a0ae0"/>
<rect x="494.60" y="251.9" width="1" height="2.9" fill="#a8a8a8"/>
<rect x="494.60" y="255.9" width="1" height="15.7" fill="#a8a8a8"/>
<rect x="494.08" y="254.8" width="2.05" height="1.1" fill="#0a0ae0"/>
<rect x="498.70" y="245.1" width="1" height="3.9" fill="#3c3c3c"/>
<rect x="498.70" y="249.8" width="1" height="7.0" fill="#3c3c3c"/>
<rect x="498.10" y="249.0" width="2.2" height="0.8" fill="#25255a"/>
<rect x="502.90" y="213.0" width="1" height="8.6" fill="#3c3c3c"/>
<rect x="502.90" y="250.8" width="1" height="4.6" fill="#3c3c3c"/>
<rect x="502.38" y="221.6" width="2.05" height="29.2" fill="#0a0ae0"/>
<rect x="507.00" y="200.5" width="1" height="8.9" fill="#3c3c3c"/>
<rect x="507.00" y="217.3" width="1" height="7.9" fill="#3c3c3c"/>
<rect x="506.48" y="209.4" width="2.05" height="7.9" fill="#0a0ae0"/>
<rect x="511.10" y="205.8" width="1" height="6.2" fill="#3c3c3c"/>
<rect x="511.10" y="212.0" width="1" height="7.2" fill="#3c3c3c"/>
<rect x="515.30" y="210.6" width="1" height="1.4" fill="#3c3c3c"/>
<rect x="515.30" y="220.2" width="1" height="9.5" fill="#a8a8a8"/>
<rect x="514.77" y="212.0" width="2.05" height="8.2" fill="#ea2020"/>
<rect x="519.40" y="197.7" width="1" height="12.0" fill="#a8a8a8"/>
<rect x="519.40" y="214.9" width="1" height="10.3" fill="#a8a8a8"/>
<rect x="518.88" y="209.7" width="2.05" height="5.2" fill="#0a0ae0"/>
<rect x="523.60" y="226.6" width="1" height="15.6" fill="#3c3c3c"/>
<rect x="523.08" y="213.0" width="2.05" height="13.6" fill="#ea2020"/>
<rect x="527.80" y="208.7" width="1" height="5.0" fill="#3c3c3c"/>
<rect x="527.80" y="223.7" width="1" height="8.0" fill="#3c3c3c"/>
<rect x="527.27" y="213.7" width="2.05" height="10.0" fill="#0a0ae0"/>
<rect x="531.90" y="205.1" width="1" height="10.9" fill="#3c3c3c"/>
<rect x="531.90" y="216.0" width="1" height="12.7" fill="#3c3c3c"/>
<rect x="536.10" y="207.3" width="1" height="6.4" fill="#3c3c3c"/>
<rect x="536.10" y="223.7" width="1" height="4.1" fill="#3c3c3c"/>
<rect x="535.58" y="213.7" width="2.05" height="10.0" fill="#0a0ae0"/>
<rect x="540.20" y="166.1" width="1" height="5.3" fill="#3c3c3c"/>
<rect x="539.68" y="171.4" width="2.05" height="39.5" fill="#0a0ae0"/>
<rect x="543.90" y="170.7" width="1" height="3.6" fill="#3c3c3c"/>
<rect x="543.90" y="199.4" width="1" height="10.1" fill="#3c3c3c"/>
<rect x="543.38" y="174.3" width="2.05" height="25.1" fill="#ea2020"/>
<rect x="548.00" y="197.7" width="1" height="2.4" fill="#3c3c3c"/>
<rect x="548.00" y="233.5" width="1" height="11.4" fill="#3c3c3c"/>
<rect x="547.48" y="200.1" width="2.05" height="33.4" fill="#ea2020"/>
<rect x="552.10" y="223.0" width="1" height="8.6" fill="#3c3c3c"/>
<rect x="552.10" y="242.2" width="1" height="15.8" fill="#3c3c3c"/>
<rect x="551.58" y="231.6" width="2.05" height="10.6" fill="#0a0ae0"/>
<rect x="556.30" y="208.0" width="1" height="5.8" fill="#3c3c3c"/>
<rect x="556.30" y="228.9" width="1" height="3.1" fill="#3c3c3c"/>
<rect x="555.77" y="213.8" width="2.05" height="15.1" fill="#0a0ae0"/>
<rect x="560.40" y="239.9" width="1" height="5.2" fill="#a8a8a8"/>
<rect x="559.88" y="215.8" width="2.05" height="24.1" fill="#ea2020"/>
<rect x="564.50" y="233.4" width="1" height="9.4" fill="#a8a8a8"/>
<rect x="564.50" y="259.3" width="1" height="12.2" fill="#3c3c3c"/>
<rect x="563.98" y="242.8" width="2.05" height="16.5" fill="#ea2020"/>
<rect x="568.70" y="267.2" width="1" height="2.2" fill="#3c3c3c"/>
<rect x="568.70" y="295.9" width="1" height="8.6" fill="#3c3c3c"/>
<rect x="568.18" y="269.4" width="2.05" height="26.5" fill="#ea2020"/>
<rect x="572.90" y="286.3" width="1" height="6.7" fill="#3c3c3c"/>
<rect x="572.90" y="293.8" width="1" height="9.2" fill="#3c3c3c"/>
<rect x="572.30" y="293.0" width="2.2" height="0.8" fill="#25255a"/>
<rect x="577.00" y="273.7" width="1" height="6.4" fill="#3c3c3c"/>
<rect x="577.00" y="293.7" width="1" height="2.2" fill="#3c3c3c"/>
<rect x="576.48" y="280.1" width="2.05" height="13.6" fill="#0a0ae0"/>
<rect x="581.30" y="305.2" width="1" height="7.1" fill="#3c3c3c"/>
<rect x="580.50" y="271.9" width="2.60" height="33.3" fill="#ea2020"/>
<path d="M584.6 304 L587 305.2 L584.6 306.4 Z" fill="#333"/>
<rect x="8.5" y="59.5" width="643.1" height="365.6" fill="none" stroke="#484848" stroke-width="1.1"/>
<rect x="651.6" y="423.10" width="2.2" height="1" fill="#4a3c3c"/>
<text x="655" y="426.1" font-size="7.47" fill="#222">91.0000</text>
<rect x="651.6" y="404.60" width="2.2" height="1" fill="#4a3c3c"/>
<text x="655" y="407.6" font-size="7.47" fill="#222">92.0000</text>
<rect x="651.6" y="386.40" width="2.2" height="1" fill="#4a3c3c"/>
<text x="655" y="389.4" font-size="7.47" fill="#222">93.0000</text>
<rect x="651.6" y="368.10" width="2.2" height="1" fill="#4a3c3c"/>
<text x="655" y="371.1" font-size="7.47" fill="#222">94.0000</text>
<rect x="651.6" y="349.90" width="2.2" height="1" fill="#4a3c3c"/>
<text x="655" y="352.9" font-size="7.47" fill="#222">95.0000</text>
<rect x="651.6" y="332.00" width="2.2" height="1" fill="#4a3c3c"/>
<text x="655" y="335.0" font-size="7.47" fill="#222">96.0000</text>
<rect x="651.6" y="314.10" width="2.2" height="1" fill="#4a3c3c"/>
<text x="655" y="317.1" font-size="7.47" fill="#222">97.0000</text>
<rect x="651.6" y="295.80" width="2.2" height="1" fill="#4a3c3c"/>
<text x="655" y="298.8" font-size="7.47" fill="#222">98.0000</text>
<rect x="651.6" y="277.70" width="2.2" height="1" fill="#4a3c3c"/>
<text x="655" y="280.7" font-size="7.47" fill="#222">99.0000</text>
<rect x="651.6" y="259.80" width="2.2" height="1" fill="#4a3c3c"/>
<text x="655" y="262.8" font-size="7.47" fill="#222">100.0000</text>
<rect x="651.6" y="241.80" width="2.2" height="1" fill="#4a3c3c"/>
<text x="655" y="244.8" font-size="7.47" fill="#222">101.0000</text>
<rect x="651.6" y="224.10" width="2.2" height="1" fill="#4a3c3c"/>
<text x="655" y="227.1" font-size="7.47" fill="#222">102.0000</text>
<rect x="651.6" y="206.00" width="2.2" height="1" fill="#4a3c3c"/>
<text x="655" y="209.0" font-size="7.47" fill="#222">103.0000</text>
<rect x="651.6" y="188.00" width="2.2" height="1" fill="#4a3c3c"/>
<text x="655" y="191.0" font-size="7.47" fill="#222">104.0000</text>
<rect x="651.6" y="169.80" width="2.2" height="1" fill="#4a3c3c"/>
<text x="655" y="172.8" font-size="7.47" fill="#222">105.0000</text>
<rect x="651.6" y="151.80" width="2.2" height="1" fill="#4a3c3c"/>
<text x="655" y="154.8" font-size="7.47" fill="#222">106.0000</text>
<rect x="651.6" y="133.90" width="2.2" height="1" fill="#4a3c3c"/>
<text x="655" y="136.9" font-size="7.47" fill="#222">107.0000</text>
<rect x="651.6" y="116.00" width="2.2" height="1" fill="#4a3c3c"/>
<text x="655" y="119.0" font-size="7.47" fill="#222">108.0000</text>
<rect x="651.6" y="97.80" width="2.2" height="1" fill="#4a3c3c"/>
<text x="655" y="100.8" font-size="7.47" fill="#222">109.0000</text>
<rect x="651.6" y="79.00" width="2.2" height="1" fill="#4a3c3c"/>
<text x="655" y="82.0" font-size="7.47" fill="#222">110.0000</text>
<rect x="653.5" y="300.6" width="34.2" height="9.2" fill="#fff" stroke="#e0603c" stroke-width="0.9"/>
<text x="655" y="308" font-size="7.47" fill="#2a2ae6">97.5400</text>
<rect x="32.90" y="425.1" width="1" height="2.6" fill="#555"/>
<text x="33.1" y="436.2" font-size="7.47" text-anchor="middle" fill="#222">09</text>
<rect x="53.50" y="425.1" width="1" height="2.6" fill="#555"/>
<text x="53.7" y="436.2" font-size="7.47" text-anchor="middle" fill="#222">16</text>
<rect x="74.10" y="425.1" width="1" height="2.6" fill="#555"/>
<text x="74.3" y="436.2" font-size="7.47" text-anchor="middle" fill="#222">23</text>
<rect x="95.00" y="425.1" width="1" height="2.6" fill="#555"/>
<text x="95.2" y="436.2" font-size="7.47" text-anchor="middle" fill="#222">30</text>
<rect x="115.70" y="425.1" width="1" height="2.6" fill="#555"/>
<text x="115.9" y="436.2" font-size="7.47" text-anchor="middle" fill="#222">07</text>
<rect x="136.30" y="425.1" width="1" height="2.6" fill="#555"/>
<text x="136.5" y="436.2" font-size="7.47" text-anchor="middle" fill="#222">14</text>
<rect x="156.80" y="425.1" width="1" height="2.6" fill="#555"/>
<text x="157.0" y="436.2" font-size="7.47" text-anchor="middle" fill="#222">21</text>
<rect x="177.50" y="425.1" width="1" height="2.6" fill="#555"/>
<text x="177.7" y="436.2" font-size="7.47" text-anchor="middle" fill="#222">28</text>
<rect x="198.00" y="425.1" width="1" height="2.6" fill="#555"/>
<text x="198.2" y="436.2" font-size="7.47" text-anchor="middle" fill="#222">04</text>
<rect x="218.60" y="425.1" width="1" height="2.6" fill="#555"/>
<text x="218.8" y="436.2" font-size="7.47" text-anchor="middle" fill="#222">11</text>
<rect x="239.00" y="425.1" width="1" height="2.6" fill="#555"/>
<text x="239.2" y="436.2" font-size="7.47" text-anchor="middle" fill="#222">18</text>
<rect x="258.70" y="425.1" width="1" height="2.6" fill="#555"/>
<text x="258.9" y="436.2" font-size="7.47" text-anchor="middle" fill="#222">25</text>
<rect x="280.00" y="425.1" width="1" height="2.6" fill="#555"/>
<text x="280.2" y="436.2" font-size="7.47" text-anchor="middle" fill="#222">02</text>
<rect x="300.90" y="425.1" width="1" height="2.6" fill="#555"/>
<text x="301.1" y="436.2" font-size="7.47" text-anchor="middle" fill="#222">09</text>
<rect x="321.80" y="425.1" width="1" height="2.6" fill="#555"/>
<text x="322.0" y="436.2" font-size="7.47" text-anchor="middle" fill="#222">16</text>
<rect x="342.20" y="425.1" width="1" height="2.6" fill="#555"/>
<text x="342.4" y="436.2" font-size="7.47" text-anchor="middle" fill="#222">23</text>
<rect x="359.10" y="425.1" width="1" height="2.6" fill="#555"/>
<text x="359.3" y="436.2" font-size="7.47" text-anchor="middle" fill="#222">30</text>
<rect x="375.50" y="425.1" width="1" height="2.6" fill="#555"/>
<text x="375.7" y="436.2" font-size="7.47" text-anchor="middle" fill="#222">06</text>
<rect x="396.10" y="425.1" width="1" height="2.6" fill="#555"/>
<text x="396.3" y="436.2" font-size="7.47" text-anchor="middle" fill="#222">13</text>
<rect x="416.40" y="425.1" width="1" height="2.6" fill="#555"/>
<text x="416.6" y="436.2" font-size="7.47" text-anchor="middle" fill="#222">20</text>
<rect x="437.10" y="425.1" width="1" height="2.6" fill="#555"/>
<text x="437.3" y="436.2" font-size="7.47" text-anchor="middle" fill="#222">27</text>
<rect x="457.70" y="425.1" width="1" height="2.6" fill="#555"/>
<text x="457.9" y="436.2" font-size="7.47" text-anchor="middle" fill="#222">03</text>
<rect x="478.20" y="425.1" width="1" height="2.6" fill="#555"/>
<text x="478.4" y="436.2" font-size="7.47" text-anchor="middle" fill="#222">10</text>
<rect x="498.90" y="425.1" width="1" height="2.6" fill="#555"/>
<text x="499.1" y="436.2" font-size="7.47" text-anchor="middle" fill="#222">17</text>
<rect x="519.70" y="425.1" width="1" height="2.6" fill="#555"/>
<text x="519.9" y="436.2" font-size="7.47" text-anchor="middle" fill="#222">24</text>
<rect x="540.00" y="425.1" width="1" height="2.6" fill="#555"/>
<text x="540.2" y="436.2" font-size="7.47" text-anchor="middle" fill="#222">03</text>
<rect x="560.40" y="425.1" width="1" height="2.6" fill="#555"/>
<text x="560.6" y="436.2" font-size="7.47" text-anchor="middle" fill="#222">10</text>
<rect x="581.10" y="425.1" width="1" height="2.6" fill="#555"/>
<text x="581.3" y="436.2" font-size="7.47" text-anchor="middle" fill="#222">17</text>
<rect x="604.90" y="425.1" width="1" height="2.6" fill="#555"/>
<text x="605.1" y="436.2" font-size="7.47" text-anchor="middle" fill="#222">24</text>
<rect x="624.90" y="425.1" width="1" height="2.6" fill="#555"/>
<text x="625.1" y="436.2" font-size="7.47" text-anchor="middle" fill="#222">31</text>
<text x="33.2" y="446.6" font-size="7.47" text-anchor="middle" fill="#222">Sep/09/13</text>
<text x="115.5" y="446.6" font-size="7.47" text-anchor="middle" fill="#222">Oct/07</text>
<text x="197.6" y="446.6" font-size="7.47" text-anchor="middle" fill="#222">Nov/04</text>
<text x="279.9" y="446.6" font-size="7.47" text-anchor="middle" fill="#222">Dec/02</text>
<text x="375.6" y="446.6" font-size="7.47" text-anchor="middle" fill="#222">Jan/06/14</text>
<text x="457.8" y="446.6" font-size="7.47" text-anchor="middle" fill="#222">Feb/03</text>
<text x="540.5" y="446.6" font-size="7.47" text-anchor="middle" fill="#222">Mar/03</text>
<rect x="9" y="459" width="6.9" height="7" fill="#30669a" stroke="#2a5078" stroke-width="0.8"/>
<rect x="18" y="456" width="0.9" height="13" fill="#555"/>
<rect x="21.2" y="455.9" width="103.2" height="13.4" fill="#fff" stroke="#aeb4bc" stroke-width="0.9"/>
<circle cx="27.9" cy="460.3" r="2" fill="none" stroke="#444" stroke-width="1"/>
<path d="M26.4 461.8 L23.4 464.8 M28.3 465.3 H30.7" stroke="#444" stroke-width="1.1" fill="none"/>
<text x="35.8" y="465.4" font-size="7.9" fill="#787878" textLength="72" lengthAdjust="spacingAndGlyphs">Search for instrument</text>
<rect x="137.1" y="456.3" width="0.9" height="12" fill="#666"/>
<text x="140.9" y="465.9" font-size="8.2" font-weight="bold" fill="#222" textLength="99.8" lengthAdjust="spacingAndGlyphs">17 Mar 2014 20:00:00 EDT</text>
</svg></body></html>
